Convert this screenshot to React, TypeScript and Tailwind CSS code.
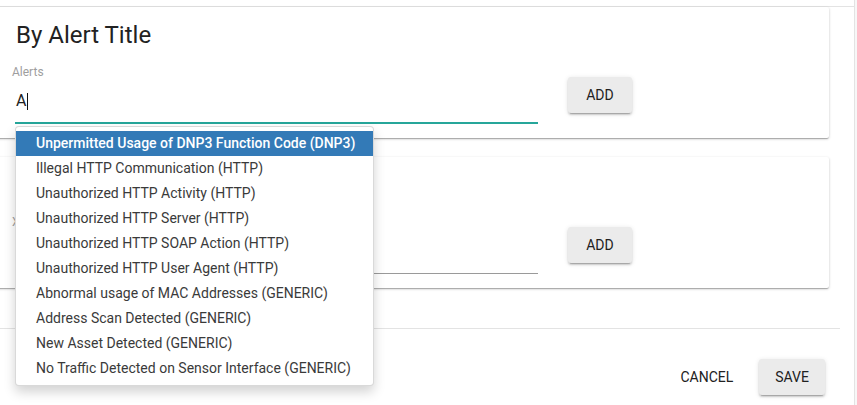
import React from "react";

const alerts = [
  "Unpermitted Usage of DNP3 Function Code (DNP3)",
  "Illegal HTTP Communication (HTTP)",
  "Unauthorized HTTP Activity (HTTP)",
  "Unauthorized HTTP Server (HTTP)",
  "Unauthorized HTTP SOAP Action (HTTP)",
  "Unauthorized HTTP User Agent (HTTP)",
  "Abnormal usage of MAC Addresses (GENERIC)",
  "Address Scan Detected (GENERIC)",
  "New Asset Detected (GENERIC)",
  "No Traffic Detected on Sensor Interface (GENERIC)",
];

const raised =
  "shadow-[0_3px_1px_-2px_rgba(0,0,0,0.2),0_2px_2px_0_rgba(0,0,0,0.14),0_1px_5px_0_rgba(0,0,0,0.12)]";

function AddButton() {
  return (
    <button
      className={`mt-[28px] ml-[30px] h-9 min-w-[64px] rounded-[3px] bg-[#ebebeb] px-4 text-sm text-[#212121] ${raised}`}
    >
      ADD
    </button>
  );
}

function Suggestions() {
  return (
    <div className="absolute left-0 top-full z-10 mt-[4px] w-[359px] rounded-[4px] border border-black/15 bg-white py-[4px] shadow-[0_6px_12px_rgba(0,0,0,0.175)]">
      {alerts.map((item, index) => (
        <div
          key={item}
          className={
            index === 0
              ? "h-[25px] bg-[#337ab7] pl-5 text-sm leading-[25px] font-medium text-white"
              : "h-[25px] pl-5 text-sm leading-[25px] text-[#3a3a3a]"
          }
        >
          {item}
        </div>
      ))}
    </div>
  );
}

type CardProps = {
  title: string;
  label: string;
  value?: string;
  active?: boolean;
};

function FilterCard({ title, label, value, active }: CardProps) {
  return (
    <div className="-ml-[4px] mr-[25px] rounded-[2px] bg-white pl-5 pt-[14px] pb-[14px] shadow-[0_1px_3px_rgba(0,0,0,0.2),0_1px_1px_rgba(0,0,0,0.14),0_2px_1px_-1px_rgba(0,0,0,0.12)]">
      <h2 className="text-2xl leading-[28px] text-[#222]">{title}</h2>
      <div className="flex items-start">
        <div className="mt-[15px]">
          <div className="-ml-[4px] text-xs leading-4 text-[#9e9e9e]">{label}</div>
          <div
            className={
              active
                ? "relative -ml-[1px] w-[523px] border-b-2 border-[#26a69a] py-[9px] pl-[1px]"
                : "relative -ml-[1px] w-[523px] border-b border-[#9a9a9a] pt-[9px] pb-[10px] pl-[1px]"
            }
          >
            <div className="flex h-6 items-center text-base text-[#222]">
              {value}
              {active && <span className="ml-[1px] inline-block h-[17px] w-px bg-[#111]" />}
            </div>
            {active && <Suggestions />}
          </div>
        </div>
        <AddButton />
      </div>
    </div>
  );
}

export default function App() {
  return (
    <div className="flex h-[405px] w-[857px] overflow-hidden bg-white font-['Roboto',sans-serif]">
      <div className="w-[854px]">
        <div className="h-[7px] border-b border-[#e3e3e3]" />
        <FilterCard title="By Alert Title" label="Alerts" value="A" active />
        <div className="mt-[19px]">
          <FilterCard title="By Alert Type" label="Xpath Types" />
        </div>
        <div className="mt-[40px] mr-[14px] border-t border-[#e3e3e3]" />
        <div className="flex justify-end gap-[10px] pt-[30px] pr-[29px]">
          <button className="h-9 min-w-[64px] rounded-[3px] px-4 text-sm text-[#212121]">
            CANCEL
          </button>
          <button
            className={`h-9 min-w-[64px] rounded-[3px] bg-[#ebebeb] px-4 text-sm text-[#212121] ${raised}`}
          >
            SAVE
          </button>
        </div>
      </div>
      <div className="w-[3px] border-l border-[#e3e3e3] bg-[#f7f7f7]" />
    </div>
  );
}
